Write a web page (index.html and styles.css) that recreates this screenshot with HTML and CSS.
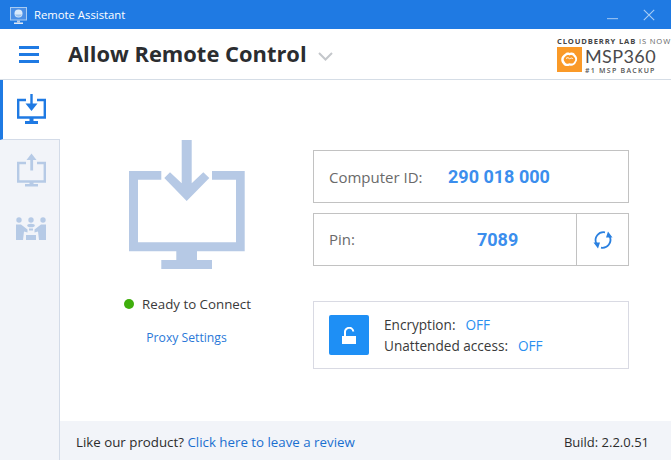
FILE: index.html
```html
<!DOCTYPE html>
<html lang="en">
<head>
<meta charset="utf-8">
<title>Remote Assistant</title>
<link rel="stylesheet" href="styles.css">
</head>
<body>
<div class="app">
  <header class="titlebar">
    <div class="titlebar-left">
      <svg class="app-icon" width="18" height="18" viewBox="0 0 18 18">
        <rect x="0.500" y="0.500" width="16" height="12.500" fill="#4a8fe6" stroke="#a9ccf2"/>
        <circle cx="8.500" cy="6.500" r="4" fill="#d9eafb"/>
        <path d="M5 7.500A3.800 3.800 0 0 0 12 7.500Z" fill="#9cc3ee"/>
        <rect x="7" y="13.500" width="3" height="2" fill="#b9cde6"/>
        <rect x="4" y="15.500" width="9" height="1.500" fill="#dfe9f5"/>
      </svg>
      <span class="app-name">Remote Assistant</span>
    </div>
    <div class="window-controls">
      <svg class="win-min" width="12" height="3" viewBox="0 0 12 3"><rect y="1" width="11" height="1.200" fill="#8fbcf0"/></svg>
      <svg width="12" height="12" viewBox="0 0 12 12"><path d="M.8.8 11.200 11.200M11.200.8.8 11.200" stroke="#a9cdf5" stroke-width="1.100" fill="none"/></svg>
    </div>
  </header>

  <div class="topbar">
    <div class="menu-btn">
      <span class="menu-line"></span><span class="menu-line"></span><span class="menu-line"></span>
    </div>
    <h1 class="page-title">Allow Remote Control</h1>
    <svg class="chevron" width="15" height="9" viewBox="0 0 15 9"><path d="M1 1 7.500 7.500 14 1" stroke="#c4c7cb" stroke-width="2" fill="none"/></svg>
    <div class="logo">
      <div class="logo-top"><b>CLOUDBERRY LAB</b> IS NOW</div>
      <div class="logo-main">
        <div class="logo-mark">
          <svg width="17" height="15" viewBox="0 0 17 15">
            <path d="M4 2C5.200.4 7.300.2 8.800 1 10.800 0 13.300.6 14 2.700 16.200 4.200 17 8 15 10.300 14.200 13 11 14.300 8.800 13.500 6 14.700 2.800 14 1.700 11.500-.3 9.500-.2 5.500 1.800 3.700 2.500 3 3 2.300 4 2Z" fill="#fff"/>
            <path d="M4.800 4C6 2.800 7.500 3 8.800 3.500 10.500 2.500 12.300 3.300 12.800 4.800 14.500 6 14.800 8.500 13.300 9.700 12.500 11.500 10.500 12 8.800 11.300 6.800 12.200 4.500 11.800 3.800 10 2.300 8.800 2.300 6 3.800 5 4.100 4.600 4.400 4.300 4.800 4Z" fill="#fa9a28"/>
            <path d="M5 6.500C6.500 5 8 6 8.800 7 10 5.500 11.500 6 12 7" fill="none" stroke="#fff" stroke-width="1"/>
          </svg>
        </div>
        <div class="logo-text">
          <div class="logo-name">MSP360</div>
          <div class="logo-sub">#1 MSP BACKUP</div>
        </div>
      </div>
    </div>
  </div>

  <div class="body">
    <nav class="sidebar">
      <div class="tab tab-active">
        <svg width="29" height="31" viewBox="0 0 29 31">
          <path d="M9 6H1.200V23.500H27.800V6H20" fill="none" stroke="#1f7ae3" stroke-width="2.400"/>
          <rect x="13.300" y="0" width="2.400" height="12" fill="#1f7ae3"/>
          <path d="M8.500 9.500H20.500L14.500 17Z" fill="#1f7ae3"/>
          <rect x="12.500" y="24" width="4" height="3" fill="#1f7ae3"/>
          <rect x="8" y="27" width="13" height="3" fill="#1f7ae3"/>
        </svg>
      </div>
      <div class="tab tab-upload">
        <svg width="29" height="35" viewBox="0 0 29 35">
          <path d="M9 11H1.200V29.500H27.800V11H20" fill="none" stroke="#b6cae6" stroke-width="2.400"/>
          <rect x="13.300" y="7" width="2.800" height="11.500" fill="#b6cae6"/>
          <path d="M9.500 8H19.500L14.500 1.500Z" fill="#b6cae6"/>
          <rect x="12.500" y="30" width="4" height="2.500" fill="#b6cae6"/>
          <rect x="8" y="32" width="13" height="2.500" fill="#b6cae6"/>
        </svg>
      </div>
      <div class="tab tab-team">
        <svg width="30" height="24" viewBox="0 0 30 24">
          <g fill="#b6cae6">
            <circle cx="3" cy="3" r="2.700"/><circle cx="15" cy="3" r="2.700"/><circle cx="27" cy="3" r="2.700"/>
            <path d="M0 7.500H5L11.500 12.500V15.500L8 14.500 7 23H0Z"/>
            <path d="M30 7.500H25L18.500 12.500V15.500L22 14.500 23 23H30Z"/>
            <ellipse cx="15" cy="8.500" rx="3.800" ry="1.800"/>
            <rect x="13" y="11.500" width="4" height="2"/>
            <rect x="10" y="18" width="10" height="5"/>
          </g>
        </svg>
      </div>
    </nav>

    <div class="content">
      <main class="main">
        <section class="status-col">
          <svg class="hero" width="116" height="130" viewBox="129 140 116 130">
            <g fill="#b6c9e5">
              <path d="M129 171H161.300V179.700H138V242.300H236V179.700H212V171H244.700V251.300H197V260H212V269H161.300V260H176.300V251.300H129Z"/>
              <path d="M181.700 140H191.700V183.300L203.300 172.300 209.300 178 186.700 201 164.300 178 170 172.300 181.700 183.300Z"/>
            </g>
          </svg>
          <div class="status"><span class="dot"></span>Ready to Connect</div>
          <a class="proxy" href="#">Proxy Settings</a>
        </section>

        <section class="info-col">
          <div class="field">
            <span class="field-label field-label-id">Computer ID:</span>
            <span class="field-value">290 018 000</span>
          </div>
          <div class="field field-pin">
            <div class="pin-main">
              <span class="field-label pin-label">Pin:</span>
              <span class="field-value pin-value">7089</span>
            </div>
            <div class="pin-refresh">
              <svg width="20" height="20" viewBox="0 0 20 20" fill="none">
                <path d="M12 2.300A8 8 0 0 0 3.300 13.500M8 17.700A8 8 0 0 0 16.700 6.500" stroke="#2a80e0" stroke-width="1.800"/>
                <path d="M.5 12.500 7 12.500 5 18.500ZM19.500 7.500 13 7.500 15 1.500Z" fill="#2a80e0"/>
              </svg>
            </div>
          </div>
          <div class="security">
            <div class="lock">
              <svg width="14" height="17" viewBox="0 0 14 17">
                <path d="M3 9V5.500A4 4 0 0 1 11.300 4.500" fill="none" stroke="#fff" stroke-width="2"/>
                <rect y="9" width="14" height="8" fill="#fff"/>
              </svg>
            </div>
            <div class="security-text">
              <div><span class="sec-label">Encryption:</span><span class="sec-value">OFF</span></div>
              <div><span class="sec-label">Unattended access:</span><span class="sec-value">OFF</span></div>
            </div>
          </div>
        </section>
      </main>

      <footer class="footer">
        <div class="footer-left">Like our product? <a class="review" href="#">Click here to leave a review</a></div>
        <div>Build: 2.2.0.51</div>
      </footer>
    </div>
  </div>
</div>
</body>
</html>
```
FILE: styles.css
```css
* { box-sizing: border-box; }
html, body { margin: 0; padding: 0; }
body {
  width: 671px;
  height: 460px;
  overflow: hidden;
  background: #fff;
  font-family: "Open Sans", "Noto Sans", sans-serif;
  font-size: 13px;
  color: #333;
}
a { text-decoration: none; }
.app { display: flex; flex-direction: column; height: 460px; }

.titlebar {
  height: 29px;
  flex: none;
  background: #1f7ae3;
  display: flex;
  align-items: center;
  justify-content: space-between;
  padding: 0 16px 0 10px;
}
.titlebar-left { display: flex; align-items: center; gap: 6px; }
.app-icon { margin-top: 3px; }
.app-name { color: #fff; font-size: 11.300px; }
.window-controls { display: flex; align-items: center; gap: 24px; }
.win-min { margin-top: 8px; }

.topbar {
  height: 51px;
  flex: none;
  border-bottom: 1px solid #d5dde6;
  display: flex;
  align-items: center;
  padding: 0 14px 0 19px;
}
.menu-btn { width: 20px; display: flex; flex-direction: column; gap: 4px; margin-right: 29px; }
.menu-line { height: 3px; background: #1f7ae3; display: block; }
.page-title {
  margin: 0 0 2px;
  font-size: 21.900px;
  font-weight: 700;
  color: #2b2d30;
  white-space: nowrap;
}
.chevron { margin: 4px 0 0 11px; }
.logo { margin-left: auto; width: 100px; flex: none; }
.logo-top { font-size: 7.600px; line-height: 9px; color: #666; white-space: nowrap; letter-spacing: .85px; margin-bottom: 1px; }
.logo-top b { color: #444; }
.logo-main { display: flex; gap: 3px; height: 25px; }
.logo-mark {
  width: 25px;
  height: 25px;
  flex: none;
  background: #fa9a28;
  display: flex;
  align-items: center;
  justify-content: center;
}
.logo-text { min-width: 0; }
.logo-name { font-family: "Lato", sans-serif; font-size: 18px; line-height: 17px; margin-top: 1px; color: #4a4a4c; letter-spacing: .4px; }
.logo-sub { font-size: 7px; line-height: 8px; margin-top: 2px; font-weight: 600; color: #555; letter-spacing: 1.250px; white-space: nowrap; }

.body { flex: 1; display: flex; min-height: 0; }
.sidebar {
  width: 60px;
  flex: none;
  background: #f2f4f9;
  border-right: 1px solid #d3dbe8;
  display: flex;
  flex-direction: column;
}
.tab { height: 60px; display: flex; align-items: center; padding-left: 17px; flex: none; }
.tab-upload { height: 62px; margin-top: -2px; }
.tab-team { padding-left: 16px; height: 46px; margin-top: 6px; }
.tab-active {
  background: #fff;
  border-left: 3px solid #1f7ae3;
  border-bottom: 1px solid #d3dbe8;
  width: 60px;
  padding-left: 14px;
}

.content { flex: 1; display: flex; flex-direction: column; min-width: 0; }
.main { flex: 1; display: flex; min-height: 0; }
.status-col {
  width: 253px;
  flex: none;
  display: flex;
  flex-direction: column;
  align-items: center;
  padding-top: 60px;
}
.hero { display: block; }
.status { display: flex; align-items: center; margin-top: 24px; padding-left: 2px; line-height: 20px; color: #3a3a3a; font-size: 13.300px; }
.dot { width: 10px; height: 10px; border-radius: 50%; background: #3fae0c; margin-right: 8px; }
.proxy { color: #2a78d8; font-size: 12.200px; margin-top: 15px; line-height: 18px; }

.info-col { width: 316px; padding-top: 70px; display: flex; flex-direction: column; }
.field {
  height: 53px;
  border: 1px solid #c2c2c2;
  display: flex;
  align-items: center;
  padding-left: 15px;
  margin-bottom: 10px;
}
.field-label { color: #6a6a6a; font-size: 15px; }
.field-label-id { width: 119px; flex: none; }
.field-value { color: #3b8eed; font-size: 18px; font-weight: 700; font-family: Roboto, sans-serif; }
.field-pin { padding-left: 0; margin-bottom: 35px; }
.pin-main { flex: 1; display: flex; align-items: center; padding-left: 15px; height: 100%; }
.pin-label { margin-bottom: 2px; }
.pin-value { margin-left: 122px; }
.pin-refresh {
  width: 52px;
  height: 100%;
  border-left: 1px solid #c2c2c2;
  display: flex;
  align-items: center;
  justify-content: center;
}
.security {
  height: 68px;
  border: 1px solid #d9dae3;
  display: flex;
  align-items: center;
  padding-left: 15px;
}
.lock {
  width: 40px;
  height: 40px;
  background: #1e8ff5;
  border-radius: 2px;
  display: flex;
  align-items: center;
  justify-content: center;
  margin-right: 15px;
}
.security-text { font-size: 13.600px; line-height: 21px; color: #3a3a3a; }
.sec-label { margin-right: 10px; }
.sec-value { color: #2a8ff0; }

.footer {
  height: 39px;
  flex: none;
  background: #f2f4f9;
  display: flex;
  align-items: center;
  justify-content: space-between;
  padding: 2px 22px 0 16px;
  color: #2c2c2c;
}
.footer-left { font-size: 13.300px; }
.review { color: #1a6fd0; }
```
